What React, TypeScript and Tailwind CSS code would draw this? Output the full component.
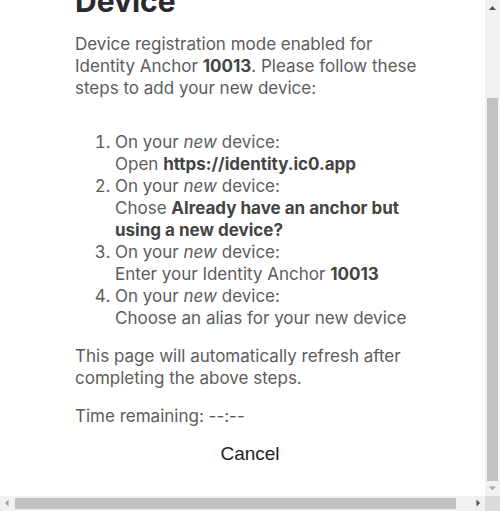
import React from "react";

function Arrow({ points, color }: { points: string; color: string }) {
  return (
    <svg width="15" height="15" viewBox="0 0 15 15" className="block">
      <polygon points={points} fill={color} />
    </svg>
  );
}

export default function App() {
  const body = { fontFamily: "Inter, 'Open Sans', sans-serif" };
  return (
    <div className="w-[500px] h-[511px] flex flex-col overflow-hidden bg-white">
      <div className="flex h-[496px]">
        <div className="flex-1 overflow-hidden pl-[75px]" style={body}>
          <div className="w-[360px] text-[17px] leading-[22px] text-[#5c5c5c]">
            <h1 className="text-[30px] font-bold leading-[40px] -mt-[19px] text-[#292a2e]">
              Device
            </h1>
            <p className="mt-[12px]">
              Device registration mode enabled for
              <br />
              Identity Anchor <b className="font-bold text-[#444]">10013</b>. Please follow these
              <br />
              steps to add your new device:
            </p>
            <ol className="list-decimal pl-[40px] mt-[32px]">
              <li>
                On your <i>new</i> device:
                <br />
                Open <b className="font-bold text-[#444]">https://identity.ic0.app</b>
              </li>
              <li>
                On your <i>new</i> device:
                <br />
                Chose <b className="font-bold text-[#444]">Already have an anchor but</b>
                <br />
                <b className="font-bold text-[#444]">using a new device?</b>
              </li>
              <li>
                On your <i>new</i> device:
                <br />
                Enter your Identity Anchor <b className="font-bold text-[#444]">10013</b>
              </li>
              <li>
                On your <i>new</i> device:
                <br />
                Choose an alias for your new device
              </li>
            </ol>
            <p className="mt-[16px]">
              This page will automatically refresh after
              <br />
              completing the above steps.
            </p>
            <p className="mt-[16px]">Time remaining: --:--</p>
            <div className="w-[350px] flex justify-center mt-[16px]">
              <button
                className="text-[19px] leading-[22px] text-[#222]"
                style={{ fontFamily: "'Liberation Sans', Arial, sans-serif" }}
              >
                Cancel
              </button>
            </div>
          </div>
        </div>
        <div className="w-[15px] flex flex-col bg-[#f1f1f1]">
          <div className="h-[15px]">
            <Arrow points="4,10 7.5,6 11,10" color="#505050" />
          </div>
          <div className="h-[83px]" />
          <div className="h-[383px] mx-[2px] bg-[#c1c1c1]" />
          <div className="h-[15px]">
            <Arrow points="4,5.5 11,5.5 7.5,9" color="#a3a3a3" />
          </div>
        </div>
      </div>
      <div className="flex h-[15px]">
        <div className="w-[485px] flex bg-[#f1f1f1]">
          <div className="w-[15px]">
            <Arrow points="5,7 8.5,3.5 8.5,10.5" color="#a3a3a3" />
          </div>
          <div className="w-[441px] my-[2px] bg-[#c1c1c1]" />
          <div className="flex-1" />
          <div className="w-[15px]">
            <Arrow points="6.5,3.5 6.5,10.5 10,7" color="#505050" />
          </div>
        </div>
        <div className="w-[15px] bg-[#dcdcdc]" />
      </div>
    </div>
  );
}
